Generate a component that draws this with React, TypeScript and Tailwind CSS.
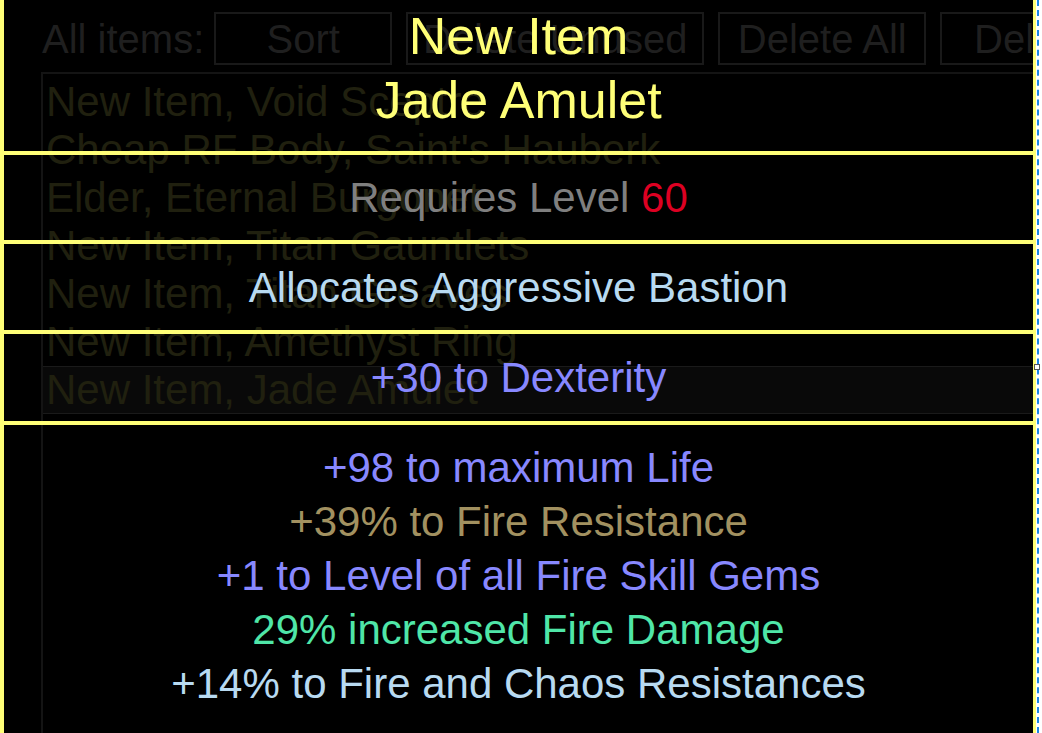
const items = [
  'New Item, Void Sceptre',
  "Cheap RF Body, Saint's Hauberk",
  'Elder, Eternal Burgonet',
  'New Item, Titan Gauntlets',
  'New Item, Titan Greaves',
  'New Item, Amethyst Ring',
  'New Item, Jade Amulet',
]

const selected = 6

const buttons = [
  { label: 'Sort', w: 'w-[178px]' },
  { label: 'Delete Unused', w: 'w-[298px]' },
  { label: 'Delete All', w: 'w-[208px]' },
  { label: 'Delete Selected', w: 'w-[350px]' },
]

const mods = [
  { text: '+98 to maximum Life', color: 'text-[#8888ff]' },
  { text: '+39% to Fire Resistance', color: 'text-[#a29160]' },
  { text: '+1 to Level of all Fire Skill Gems', color: 'text-[#8888ff]' },
  { text: '29% increased Fire Damage', color: 'text-[#4fe6a8]' },
  { text: '+14% to Fire and Chaos Resistances', color: 'text-[#b8daf1]' },
]

function Divider() {
  return <div className="h-[4px] bg-[#ffff77]" />
}

function ItemTooltip() {
  return (
    <div className="absolute left-0 top-[-24px] w-[1036px] border-l-4 border-r-[3px] border-t-4 border-[#ffff77] text-center">
      <div className="pb-[19px] pt-[24px] text-[52px] leading-[64px] text-[#ffff77]">
        <div>New Item</div>
        <div>Jade Amulet</div>
      </div>
      <Divider />
      <div className="flex h-[85px] items-center justify-center text-[42px] text-[#7f7f7f]">
        <span>
          Requires Level <span className="text-[#dd0022]">60</span>
        </span>
      </div>
      <Divider />
      <div className="flex h-[86px] items-center justify-center text-[42px] text-[#b8daf1]">
        Allocates Aggressive Bastion
      </div>
      <Divider />
      <div className="flex h-[87px] items-center justify-center text-[42px] text-[#8888ff]">
        +30 to Dexterity
      </div>
      <Divider />
      <div className="flex flex-col pb-[60px] pt-[16px] text-[42px] leading-[54px]">
        {mods.map((m) => (
          <div key={m.text} className={m.color}>
            {m.text}
          </div>
        ))}
      </div>
    </div>
  )
}

export default function App() {
  return (
    <div
      className="flex h-[733px] w-[1042px] overflow-hidden bg-white"
      style={{ fontFamily: '"Liberation Sans", Arial, sans-serif' }}
    >
      <div className="relative h-full w-[1036px] shrink-0 overflow-hidden bg-black">
        {/* item list underneath the hover tooltip */}
        <div className="flex flex-col pl-[41px] pt-[12px]">
          <div className="flex h-[53px] items-center text-[40px] text-[#1f1f1f]">
            <span className="mr-[10px] w-[164px] whitespace-nowrap pl-[1px]">All items:</span>
            <div className="flex gap-[14px]">
              {buttons.map((b) => (
                <div
                  key={b.label}
                  className={`flex h-[53px] shrink-0 items-center justify-center whitespace-nowrap border-2 border-[#191919] ${b.w}`}
                >
                  {b.label}
                </div>
              ))}
            </div>
          </div>
          <div className="mt-[7px] h-[700px] w-[1100px] border-l-2 border-t-2 border-[#141414] pt-[4px]">
            {items.map((it, i) => (
              <div
                key={it}
                className={`h-[48px] whitespace-nowrap pl-[3px] text-[42px] text-[#20200f] ${
                  i === selected ? 'border-y border-[#1a1a1a] bg-[#090909] leading-[46px]' : 'leading-[48px]'
                }`}
              >
                {it}
              </div>
            ))}
          </div>
        </div>
        <ItemTooltip />
      </div>
      <div className="relative ml-[1px] h-full border-l-2 border-dashed border-[#1e88e5]">
        <div className="absolute left-[-5px] top-[364px] h-[6px] w-[6px] border border-[#555] bg-white" />
      </div>
    </div>
  )
}
